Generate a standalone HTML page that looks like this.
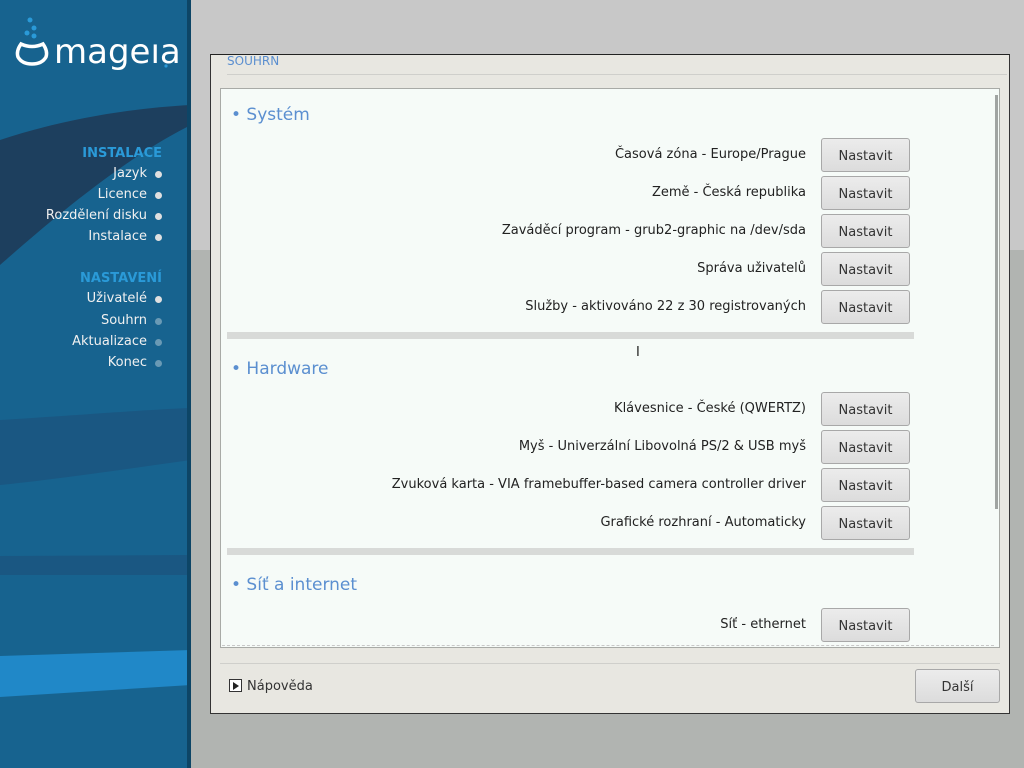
<!DOCTYPE html>
<html><head><meta charset="utf-8"><style>
*{margin:0;padding:0;box-sizing:border-box}
body{width:1024px;height:768px;overflow:hidden;position:relative;font-family:"DejaVu Sans","Liberation Sans",sans-serif;font-size:13px;color:#222;background:#c8c8c8}
.abs{position:absolute}
#side{left:0;top:0;width:191px;height:768px;background:#17638f;overflow:hidden}
#side .edge{right:0;top:0;width:4px;height:768px;background:#0d4566}
.nav{right:44px;text-align:right;color:#f0f0f0;font-size:13px}
.nav span{position:absolute;right:-15px;top:5px;width:7px;height:7px;border-radius:50%;background:#e0e0e0}
.nav.dim span{background:#6a9ab5}
.navh{right:29px;color:#2a9ad8;font-weight:bold;font-size:13px}
#dlg{left:210px;top:54px;width:800px;height:660px;background:#e8e7e1;border:1px solid #333;border-top-color:#222}
#inner{left:220px;top:88px;width:780px;height:560px;background:#f6fbf8;border:1px solid #a8aaa6}
.h{left:231px;color:#5b8fd0;font-size:17px}
.lbl{right:218px;text-align:right;white-space:nowrap}
.btn{left:821px;width:89px;height:34px;border:1px solid #a8a8a8;border-radius:3px;background:linear-gradient(#ececec,#dcdcdc);text-align:center;line-height:35px;color:#333}
.sep{left:227px;width:687px;height:7px;background:#d8dad8}
</style></head><body>
<div class="abs" style="left:191px;top:250px;width:833px;height:518px;background:#b1b4b1"></div>
<div id="side" class="abs">
<svg class="abs" style="left:0;top:0" width="191" height="768">
<path d="M0 140 C60 120 130 108 191 105 L191 125 C120 160 40 230 0 265Z" fill="#1d3f5e"/>
<path d="M0 420 C80 415 140 410 191 408 L191 460 C120 470 50 480 0 485Z" fill="#1a5782"/>
<path d="M0 556 L191 555 L191 575 L0 575Z" fill="#1a5782"/>
<path d="M0 656 L191 650 L191 685 L0 697Z" fill="#2088c8"/>
</svg>
<div class="abs edge"></div>
<svg class="abs" style="left:14px;top:16px" width="172" height="56">
<circle cx="16" cy="4" r="2.5" fill="#2a9ad8"/><circle cx="20" cy="12" r="2.5" fill="#2a9ad8"/><circle cx="13" cy="17" r="2.5" fill="#2a9ad8"/><circle cx="20" cy="20" r="2.5" fill="#2a9ad8"/>
<path d="M7 28 Q18 33 29 28 Q34 35 32 41 Q28 48 18 48 Q8 48 4 41 Q2 35 7 28Z" fill="none" stroke="#fff" stroke-width="3.5"/>
<text x="40" y="47" fill="#fff" font-size="34" font-family="DejaVu Sans,sans-serif">mageıa</text>
<circle cx="152" cy="50" r="1.6" fill="#2a9ad8"/>
</svg>
<div class="abs navh" style="top:146px">INSTALACE</div>
<div class="abs nav" style="top:166px">Jazyk<span></span></div>
<div class="abs nav" style="top:187px">Licence<span></span></div>
<div class="abs nav" style="top:208px">Rozdělení disku<span></span></div>
<div class="abs nav" style="top:229px">Instalace<span></span></div>
<div class="abs navh" style="top:271px">NASTAVENÍ</div>
<div class="abs nav" style="top:291px">Uživatelé<span></span></div>
<div class="abs nav dim" style="top:313px">Souhrn<span></span></div>
<div class="abs nav dim" style="top:334px">Aktualizace<span></span></div>
<div class="abs nav dim" style="top:355px">Konec<span></span></div>
</div>
<div id="dlg" class="abs"></div>
<div class="abs" style="left:227px;top:54px;color:#5b8fd0;font-size:12px">SOUHRN</div>
<div class="abs" style="left:227px;top:74px;width:780px;height:1px;background:#cfcfcb"></div>
<div id="inner" class="abs"></div>
<div class="abs" style="left:995px;top:95px;width:3px;height:414px;background:#a0a4a2"></div>
<div class="abs" style="left:222px;top:645px;width:772px;border-top:1px dashed #c8c8c8"></div>
<div class="abs h" style="top:105px">• Systém</div>
<div class="abs lbl" style="top:147px">Časová zóna - Europe/Prague</div><div class="abs btn" style="top:138px">Nastavit</div>
<div class="abs lbl" style="top:185px">Země - Česká republika</div><div class="abs btn" style="top:176px">Nastavit</div>
<div class="abs lbl" style="top:223px">Zaváděcí program - grub2-graphic na /dev/sda</div><div class="abs btn" style="top:214px">Nastavit</div>
<div class="abs lbl" style="top:261px">Správa uživatelů</div><div class="abs btn" style="top:252px">Nastavit</div>
<div class="abs lbl" style="top:299px">Služby - aktivováno 22 z 30 registrovaných</div><div class="abs btn" style="top:290px">Nastavit</div>
<div class="abs sep" style="top:332px"></div>
<div class="abs h" style="top:359px">• Hardware</div>
<div class="abs lbl" style="top:401px">Klávesnice - České (QWERTZ)</div><div class="abs btn" style="top:392px">Nastavit</div>
<div class="abs lbl" style="top:439px">Myš - Univerzální Libovolná PS/2 &amp; USB myš</div><div class="abs btn" style="top:430px">Nastavit</div>
<div class="abs lbl" style="top:477px">Zvuková karta - VIA framebuffer-based camera controller driver</div><div class="abs btn" style="top:468px">Nastavit</div>
<div class="abs lbl" style="top:515px">Grafické rozhraní - Automaticky</div><div class="abs btn" style="top:506px">Nastavit</div>
<div class="abs sep" style="top:548px"></div>
<div class="abs h" style="top:575px">• Síť a internet</div>
<div class="abs lbl" style="top:617px">Síť - ethernet</div><div class="abs btn" style="top:608px">Nastavit</div>
<div class="abs" style="left:636px;top:345px;font-size:13px;color:#222">I</div>
<div class="abs" style="left:220px;top:663px;width:780px;height:1px;background:#cfcfcb"></div>
<div class="abs" style="left:229px;top:679px;width:13px;height:13px;border:1px solid #333;background:#fff"></div>
<div class="abs" style="left:233px;top:682px;width:0;height:0;border-left:6px solid #222;border-top:4px solid transparent;border-bottom:4px solid transparent"></div>
<div class="abs" style="left:247px;top:679px;color:#333">Nápověda</div>
<div class="abs btn" style="left:915px;top:669px;width:85px;height:34px">Další</div>
</body></html>
